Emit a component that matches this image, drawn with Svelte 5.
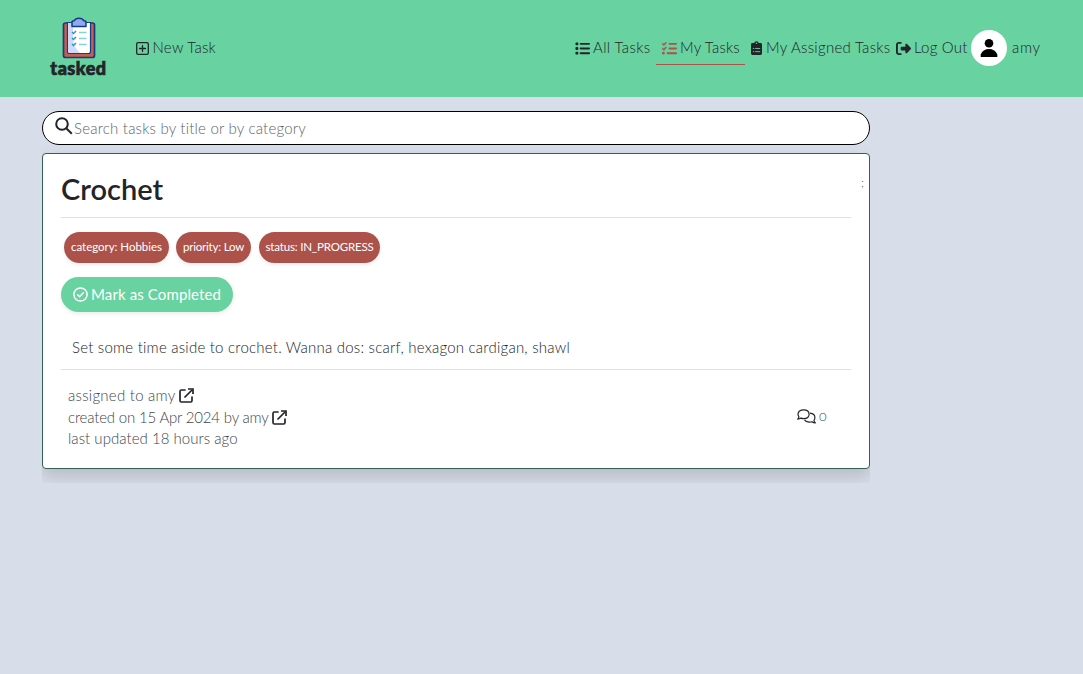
<script>
  const tags = [
    { text: 'category: Hobbies', width: 105, spacing: -0.03 },
    { text: 'priority: Low', width: 75, spacing: -0.21 },
    { text: 'status: IN_PROGRESS', width: 121, spacing: -0.17 }
  ];
</script>

{#snippet external()}
  <svg class="external" viewBox="0 0 15 15" width="15" height="15" fill="none" stroke="#212529" stroke-width="1.7">
    <path d="M6 2H2.400Q1 2 1 3.400V12.600Q1 14 2.400 14H11.600Q13 14 13 12.600V9" stroke-linecap="round" />
    <path d="M5.500 9.500L13 2" />
    <path d="M9 1H14V6" />
  </svg>
{/snippet}

<header>
  <a class="brand" href="#home">
    <svg viewBox="0 0 34 42" width="34" height="42">
      <rect x="1.500" y="6" width="31" height="34.500" rx="2" fill="#c45f51" stroke="#183b80" stroke-width="1.700" />
      <path d="M5.500 5.500H28.500V34.500Q28.500 36.500 26.500 36.500H7.500Q5.500 36.500 5.500 34.500Z" fill="#fff" stroke="#183b80" stroke-width="1.200" />
      <path d="M6 6H11V23Q12 31 18 36H8Q6 36 6 34Z" fill="#ced9fb" />
      <path d="M10 5.200Q10 3.800 12 3.800Q13.500 1.200 17 1.200T22 3.800Q24 3.800 24 5.200V9.500H10Z" fill="#8eaaf3" stroke="#183b80" stroke-width="1.500" stroke-linejoin="round" />
      <path d="M10 15l1.500 1.500 2.500-2.500M10 21l1.500 1.500 2.500-2.500M10 27l1.500 1.500 2.500-2.500" fill="none" stroke="#2b9bb8" stroke-width="1.500" />
      <path d="M17 15.500h7.500M17 21.500h7.500M17 27.500h7.500" stroke="#82d3d3" stroke-width="1.600" />
    </svg>
    <span>tasked</span>
  </a>

  <a class="item new" href="#new">
    <svg viewBox="0 0 13 13" width="13" height="13" fill="none" stroke="#212529" stroke-width="1.300">
      <rect x=".7" y=".7" width="11.600" height="11.600" rx="1.400" />
      <path d="M6.500 3.500v6M3.500 6.500h6" stroke-linecap="round" />
    </svg>
    <span>New Task</span>
  </a>

  <nav>
    <a class="item all" href="#all">
      <svg viewBox="0 0 512 512" width="15" height="15" fill="#212529">
        <path d="M40 48C26.700 48 16 58.700 16 72v48c0 13.300 10.700 24 24 24H88c13.300 0 24-10.700 24-24V72c0-13.300-10.700-24-24-24H40zM192 64c-17.700 0-32 14.300-32 32s14.300 32 32 32H480c17.700 0 32-14.300 32-32s-14.300-32-32-32H192zm0 160c-17.700 0-32 14.300-32 32s14.300 32 32 32H480c17.700 0 32-14.300 32-32s-14.300-32-32-32H192zm0 160c-17.700 0-32 14.300-32 32s14.300 32 32 32H480c17.700 0 32-14.300 32-32s-14.300-32-32-32H192zM16 232v48c0 13.300 10.700 24 24 24H88c13.300 0 24-10.700 24-24V232c0-13.300-10.700-24-24-24H40c-13.300 0-24 10.700-24 24zM40 368c-13.300 0-24 10.700-24 24v48c0 13.300 10.700 24 24 24H88c13.300 0 24-10.700 24-24V392c0-13.300-10.700-24-24-24H40z" />
      </svg>
      <span>All Tasks</span>
    </a>
    <a class="item mine" href="#mine">
      <svg viewBox="0 0 512 512" width="15" height="15" fill="#ad524a">
        <path d="M152.100 38.200c9.900 8.900 10.700 24 1.800 33.900l-72 80c-4.400 4.900-10.600 7.800-17.200 7.900s-12.900-2.400-17.600-7L7 113C-2.300 103.600-2.300 88.400 7 79s24.600-9.400 33.900 0l22.100 22.100 55.100-61.200c8.900-9.900 24-10.700 33.900-1.800zm0 160c9.900 8.900 10.700 24 1.800 33.900l-72 80c-4.400 4.900-10.600 7.800-17.200 7.900s-12.900-2.400-17.600-7L7 273c-9.400-9.400-9.400-24.600 0-33.900s24.600-9.400 33.900 0l22.100 22.100 55.100-61.200c8.900-9.900 24-10.700 33.900-1.800zM224 96c0-17.700 14.300-32 32-32H480c17.700 0 32 14.300 32 32s-14.300 32-32 32H256c-17.700 0-32-14.300-32-32zm0 160c0-17.700 14.300-32 32-32H480c17.700 0 32 14.300 32 32s-14.300 32-32 32H256c-17.700 0-32-14.300-32-32zM160 416c0-17.700 14.300-32 32-32H480c17.700 0 32 14.300 32 32s-14.300 32-32 32H192c-17.700 0-32-14.300-32-32zM48 368a48 48 0 1 1 0 96 48 48 0 1 1 0-96z" />
      </svg>
      <span>My Tasks</span>
    </a>
    <a class="item assigned" href="#assigned">
      <svg viewBox="0 0 12 15" width="11" height="14">
        <path d="M1.600 2H3.500Q4 .2 6 .2T8.500 2H10.400Q12 2 12 3.600V13.400Q12 15 10.400 15H1.600Q0 15 0 13.400V3.600Q0 2 1.600 2Z" fill="#212529" />
        <circle cx="6" cy="2.400" r=".8" fill="#68d2a0" />
        <path d="M2 8h1.500M4.500 8H10M2 11.500h1.500M4.500 11.500H10" stroke="#68d2a0" stroke-width="1" />
      </svg>
      <span>My Assigned Tasks</span>
    </a>
    <a class="item logout" href="#logout">
      <svg viewBox="0 0 512 512" width="15" height="15" fill="#212529">
        <path d="M377.900 105.900L500.700 228.700c7.200 7.200 11.300 17.100 11.300 27.300s-4.100 20.100-11.300 27.300L377.900 406.100c-6.400 6.400-15 9.900-24 9.900c-18.700 0-33.900-15.200-33.900-33.900l0-62.100-128 0c-17.700 0-32-14.300-32-32l0-64c0-17.700 14.300-32 32-32l128 0 0-62.100c0-18.700 15.200-33.900 33.900-33.900c9 0 17.600 3.600 24 9.900zM160 96L96 96c-17.700 0-32 14.300-32 32l0 256c0 17.700 14.300 32 32 32l64 0c17.700 0 32 14.300 32 32s-14.300 32-32 32l-64 0c-53 0-96-43-96-96L0 128C0 75 43 32 96 32l64 0c17.700 0 32 14.300 32 32s-14.300 32-32 32z" />
      </svg>
      <span>Log Out</span>
    </a>
    <a class="profile" href="#profile">
      <svg viewBox="0 0 36 36" width="36" height="36">
        <circle cx="18" cy="18" r="18" fill="#fff" />
        <circle cx="18" cy="13.200" r="4.300" />
        <path d="M9.700 27V24.500Q12 19 18 19T26.300 24.500V27Z" />
      </svg>
      <span>amy</span>
    </a>
  </nav>
</header>

<main>
  <div class="search">
    <svg viewBox="0 0 18 18" width="18" height="18" fill="none" stroke="#212529" stroke-width="2">
      <circle cx="7" cy="7" r="5.800" />
      <path d="M11.200 11.200L16.800 16.800" />
    </svg>
    <span>Search tasks by title or by category</span>
  </div>

  <article>
    <div class="title">
      <h1>Crochet</h1>
      <span class="mark">;</span>
    </div>
    <div class="tags">
      {#each tags as tag}
        <span class="tag" style="width:{tag.width}px;letter-spacing:{tag.spacing}px">{tag.text}</span>
      {/each}
    </div>
    <button>
      <svg viewBox="0 0 15 15" width="15" height="15" fill="none" stroke="#fff" stroke-width="1.500">
        <circle cx="7.500" cy="7.500" r="6.600" />
        <path d="M4.600 7.700l2 2 3.800-3.900" stroke-linecap="round" stroke-linejoin="round" />
      </svg>
      <span>Mark as Completed</span>
    </button>
    <p class="description">Set some time aside to crochet. Wanna dos: scarf, hexagon cardigan, shawl</p>
    <footer>
      <div class="meta">
        <div><span class="m1">assigned to amy</span>{@render external()}</div>
        <div><span class="m2">created on 15 Apr 2024 by amy</span>{@render external()}</div>
        <div><span class="m3">last updated 18 hours ago</span></div>
      </div>
      <div class="comments">
        <svg viewBox="0 0 19 15" width="19" height="15" fill="none" stroke="#212529" stroke-width="1.200" stroke-linejoin="round">
          <path d="M6.600 .8C9.900 .8 12.100 2.700 12.100 5.200S9.900 9.600 6.600 9.600Q5 9.600 3.900 9.100Q2.600 10.100 .7 10.100Q1.900 9 1.900 7.600Q1 6.600 1 5.200C1 2.700 3.300 .8 6.600 .8Z" />
          <path d="M13 4.200C16 4.500 17.900 6.300 17.900 8.700Q17.900 10.200 17 11.200Q17.100 12.800 18.300 13.800Q16.300 13.800 14.900 12.700Q13.800 13.100 12.500 13.100Q9 13.100 7.500 10.700" />
        </svg>
        <span>0</span>
      </div>
    </footer>
  </article>
</main>

<style>
  :global(body) {
    background: #d7dde9;
    color: #212529;
    font: 300 15px/21.500px Lato, 'Open Sans', sans-serif;
  }
  * { box-sizing: border-box; }
  svg { display: block; flex: none; }
  a { color: inherit; text-decoration: none; }
  span { white-space: nowrap; }

  header {
    display: flex;
    align-items: flex-start;
    height: 97px;
    padding-left: 50px;
    background: #68d2a0;
  }
  .brand { display: flex; flex-direction: column; align-items: center; width: 57px; padding-top: 17px; }
  .brand span { font-weight: 900; font-size: 18px; line-height: 18px; letter-spacing: .5px; -webkit-text-stroke: .7px #212529; }
  .item { display: flex; align-items: center; height: 36px; margin-top: 30px; letter-spacing: .27px; flex: none; }
  .new { margin-left: 29px; gap: 3.500px; }
  nav { display: flex; align-items: flex-start; margin-left: auto; width: 508px; }
  .all { width: 81px; gap: 3px; letter-spacing: .37px; }
  .mine { width: 89px; padding-left: 5.500px; gap: 3.500px; border-bottom: 1px solid #ad524a; height: 35px; letter-spacing: .2px; }
  .mine svg, .mine span { position: relative; top: 1px; }
  .assigned { width: 145px; padding-left: 6px; gap: 4px; }
  .logout { width: 81px; padding-left: 6px; gap: 3px; letter-spacing: .22px; }
  .profile { display: flex; align-items: center; gap: 5px; height: 36px; margin-top: 30px; letter-spacing: .7px; }

  main { width: 828px; height: 372px; margin: 14px 0 0 42px; overflow: hidden; }
  .search {
    display: flex;
    align-items: center;
    gap: 1px;
    height: 34px;
    padding: 1px 12px;
    border: 1px solid #000;
    border-radius: 17px;
    background: #fff;
    color: #5d646b;
    letter-spacing: .21px;
  }
  .search svg { margin-top: -4px; }
  .search span { padding-top: 2px; }
  article {
    height: 316px;
    margin-top: 8px;
    padding: 0 18px;
    background: #fff;
    border: 1px solid #32614f;
    border-radius: 4px;
    box-shadow: 0 8px 16px rgba(0, 0, 0, .15);
  }
  .title { display: flex; justify-content: space-between; height: 64px; border-bottom: 1px solid #dee2e6; }
  h1 { margin: 0; padding-top: 17px; font-size: 29px; line-height: 36px; font-weight: 600; }
  .mark { width: 3px; margin: 20px -13px 0 0; font-size: 12px; line-height: 18px; font-weight: 300; color: #6b4376; }
  .tags { display: flex; gap: 7px; padding: 14px 0 0 3px; }
  .tag:last-child { margin-left: 1px; }
  .tag {
    height: 31px;
    border-radius: 16px;
    background: #ad524a;
    color: #fff;
    font-size: 11.500px;
    line-height: 30px;
    font-weight: 400;
    text-align: center;
    box-shadow: 0 2px 4px rgba(0, 0, 0, .075);
  }
  button {
    display: flex;
    align-items: center;
    gap: 3px;
    width: 172px;
    height: 35px;
    margin: 14px 0 0;
    padding: 0 0 0 12px;
    border: 0;
    border-radius: 18px;
    background: #68d2a0;
    color: #fff;
    font: 400 15px Lato, sans-serif;
    letter-spacing: .12px;
    box-shadow: 0 2px 4px rgba(0, 0, 0, .075);
  }
  button span { padding-bottom: 1px; }
  .description { margin: 25px 0 0; padding: 0 0 10px 11px; letter-spacing: .225px; }
  footer { display: flex; justify-content: space-between; height: 98px; border-top: 1px solid #dee2e6; color: #40464c; }
  .meta { padding: 15.500px 0 0 7px; }
  .meta div { display: flex; align-items: center; gap: 3px; }
  .m1 { letter-spacing: .26px; }
  .m2 { letter-spacing: -.18px; }
  .m3 { letter-spacing: .04px; }
  .comments { display: flex; align-items: center; align-self: flex-start; gap: 3px; margin: 36px 22px 0 0; }
  .comments span { font-size: 12px; width: 10px; transform: scaleX(1.1); transform-origin: left; }
</style>
